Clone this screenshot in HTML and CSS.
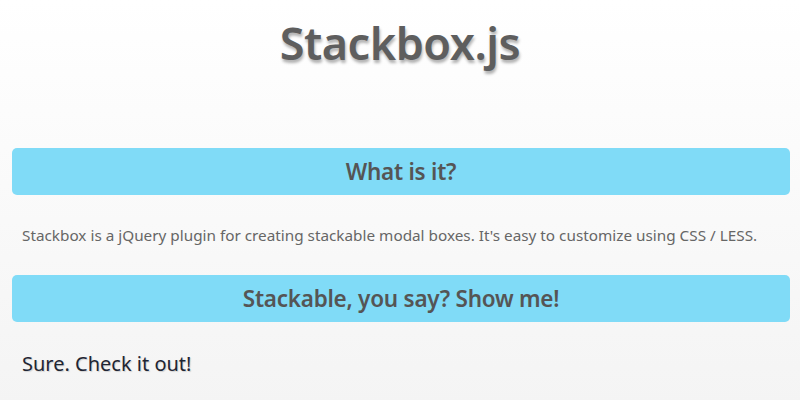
FILE: index.html
```html
<!DOCTYPE html>
<html lang="en">
<head>
  <meta charset="UTF-8">
  <title>Stackbox.js</title>
  <link rel="stylesheet" href="styles.css">
</head>
<body>
  <header class="page-header">
    <h1>Stackbox.js</h1>
  </header>

  <div class="content">
    <h2 class="section-title">What is it?</h2>
    <p class="intro">Stackbox is a jQuery plugin for creating stackable modal boxes. It's easy to customize using CSS / LESS.</p>

    <h2 class="section-title">Stackable, you say? Show me!</h2>
    <p class="demo-text">Sure. Check it out!</p>
  </div>
</body>
</html>
```

FILE: styles.css
```css
/* Base styles */
html {
  background: linear-gradient(to bottom, #ffffff 0%, #f4f4f4 100%);
  min-height: 100%;
}

body {
  font-family: "Noto Sans", "DejaVu Sans", sans-serif;
  margin: 0;
  color: #555;
}

.page-header {
  text-align: center;
  padding: 12px 0 75px;
}

.page-header h1 {
  margin: 0;
  font-size: 45px;
  font-weight: 600;
  letter-spacing: -0.5px;
  color: #5e5e5e;
  text-shadow: 1px 3px 3px rgba(0, 0, 0, 0.3);
}

.content {
  padding: 0 10px 0 12px;
}

.section-title {
  margin: 0;
  height: 47px;
  line-height: 47px;
  text-align: center;
  font-size: 22.5px;
  font-weight: 600;
  letter-spacing: -0.25px;
  color: #555;
  background-color: #80dbf7;
  border-radius: 5px;
}

.intro {
  margin: 0;
  padding: 30px 10px 30px;
  font-size: 15.3px;
  color: #666;
}

.demo-text {
  margin: 0;
  padding: 28px 10px;
  font-size: 20px;
  color: #1f2533;
  text-shadow: 1px 1px 1px rgba(0, 0, 0, 0.15);
}
```
